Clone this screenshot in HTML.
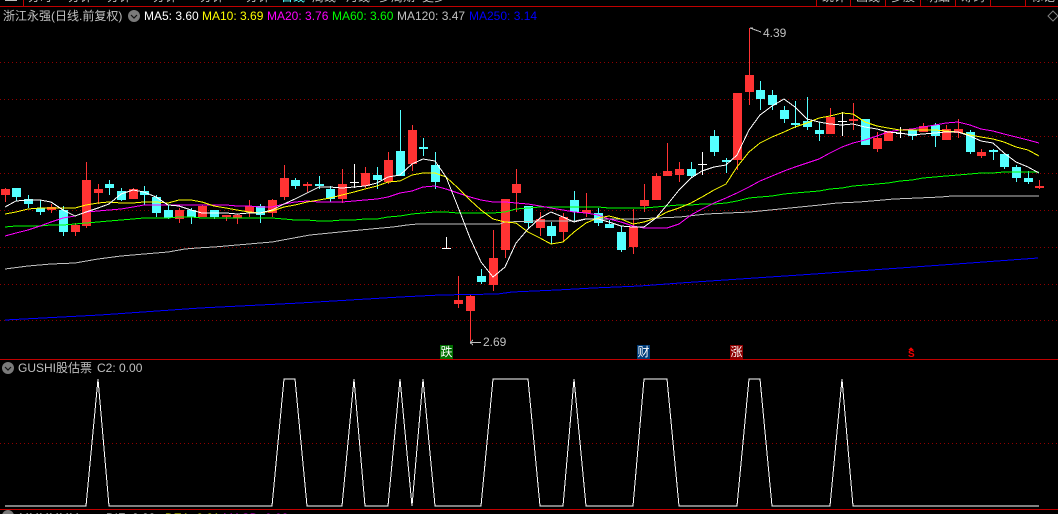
<!DOCTYPE html>
<html><head><meta charset="utf-8"><style>
html,body{margin:0;padding:0;background:#000;}
#w{position:relative;width:1058px;height:514px;overflow:hidden;background:#000;font-family:"Liberation Sans","Noto Sans CJK SC",sans-serif;}
svg{position:absolute;left:0;top:0;}
.t{position:absolute;white-space:nowrap;font-size:12px;line-height:14px;color:#c0c0c0;}
.h{position:absolute;top:-10px;white-space:nowrap;font-size:12px;line-height:14px;color:#c0c0c0;}
.b{position:absolute;width:13px;height:14px;top:345px;color:#fff;font-size:12px;line-height:14px;text-align:center;}
</style></head><body><div id="w">
<svg width="1058" height="514" viewBox="0 0 1058 514">
<g stroke="#900000" stroke-width="1" shape-rendering="crispEdges" fill="none">
<path stroke-dasharray="1 3" d="M0 62.5H1058M0 99.5H1058M0 136.5H1058M0 173.5H1058M0 210.5H1058M0 247.5H1058M0 284.5H1058M0 320.5H1058M0 443.5H1058"/>
<path stroke="#c00000" d="M0 6.5H1058M23.5 0V6M816.5 0V6M850.5 0V6M885.5 0V6M920.5 0V6M955.5 0V6M990.5 0V6M1025.5 0V6M0 359.5H1058M0 509.5H1058"/>
</g>
<rect x="5" y="0" width="12" height="1" fill="#c0c0c0"/>
<path fill="#ff3333" shape-rendering="crispEdges" d="M1 189h9v6h-9zM47 207h9v3h-9zM71 225h9v7h-9zM82 180h9v46h-9zM94 189h9v4h-9zM129 189h9v10h-9zM175 210h9v9h-9zM198 206h9v11h-9zM222 215h9v2h-9zM233 215h9v3h-9zM245 206h9v6h-9zM268 200h9v13h-9zM280 178h9v19h-9zM303 184h9v2h-9zM338 184h9v15h-9zM361 173h9v13h-9zM384 160h9v22h-9zM408 130h9v34h-9zM454 300h9v4h-9zM466 296h9v15h-9zM489 258h9v27h-9zM501 199h9v51h-9zM512 184h9v9h-9zM536 219h9v9h-9zM559 217h9v15h-9zM582 210h9v3h-9zM629 227h9v20h-9zM640 200h9v6h-9zM652 176h9v24h-9zM663 171h9v5h-9zM675 169h9v6h-9zM733 93h9v67h-9zM745 75h9v17h-9zM826 117h9v17h-9zM849 119h9v2h-9zM873 138h9v11h-9zM884 131h9v10h-9zM919 126h9v6h-9zM942 129h9v11h-9zM954 129h9v4h-9zM977 152h9v4h-9zM1035 186h9v2h-9z"/>
<path stroke="#ff3333" fill="none" shape-rendering="crispEdges" d="M5.5 188V202M51.5 204V213M75.5 223V236M86.5 162V228M98.5 184V204M133.5 188V199M179.5 208V223M202.5 205V217M226.5 215V221M237.5 214V224M249.5 200V217M272.5 199V217M284.5 165V200M307.5 182V192M342.5 169V203M365.5 167V188M388.5 152V184M412.5 125V171M458.5 276V308M470.5 294V341M493.5 230V291M505.5 199V258M516.5 169V212M540.5 212V236M563.5 213V242M586.5 193V217M633.5 209V254M644.5 184V212M656.5 173V200M667.5 143V176M679.5 162V182M737.5 93V170M749.5 28V105M830.5 108V134M853.5 103V130M877.5 132V152M888.5 131V141M923.5 123V132M946.5 125V140M958.5 119V138M981.5 149V158M1039.5 180V189"/>
<path fill="#54ffff" shape-rendering="crispEdges" d="M12 188h9v9h-9zM24 199h9v5h-9zM36 208h9v4h-9zM59 210h9v22h-9zM105 184h9v4h-9zM117 191h9v9h-9zM140 191h9v4h-9zM152 197h9v16h-9zM164 210h9v8h-9zM187 210h9v7h-9zM210 210h9v7h-9zM256 206h9v9h-9zM291 180h9v6h-9zM315 184h9v2h-9zM326 189h9v10h-9zM373 175h9v5h-9zM396 151h9v25h-9zM419 147h9v2h-9zM431 165h9v17h-9zM477 276h9v6h-9zM524 206h9v17h-9zM547 226h9v10h-9zM570 200h9v12h-9zM594 213h9v10h-9zM605 224h9v4h-9zM617 232h9v18h-9zM687 169h9v7h-9zM710 136h9v16h-9zM722 160h9v2h-9zM756 90h9v9h-9zM768 95h9v10h-9zM780 110h9v9h-9zM791 123h9v2h-9zM803 121h9v6h-9zM815 130h9v4h-9zM861 119h9v26h-9zM908 130h9v6h-9zM931 125h9v11h-9zM966 132h9v20h-9zM989 150h9v2h-9zM1000 154h9v13h-9zM1012 167h9v11h-9zM1024 178h9v4h-9z"/>
<path stroke="#54ffff" fill="none" shape-rendering="crispEdges" d="M16.5 188V201M28.5 195V208M40.5 200V215M63.5 206V236M109.5 180V195M121.5 188V201M144.5 186V205M156.5 195V217M168.5 205V219M191.5 208V224M214.5 210V219M260.5 204V223M295.5 178V189M319.5 176V189M330.5 186V202M377.5 167V189M400.5 110V176M423.5 138V156M435.5 152V189M481.5 269V284M528.5 206V229M551.5 222V244M574.5 191V221M598.5 208V226M609.5 220V228M621.5 226V252M691.5 162V178M714.5 130V156M726.5 158V173M760.5 81V110M772.5 90V110M784.5 106V123M795.5 101V128M807.5 97V130M819.5 122V141M865.5 119V145M912.5 130V140M935.5 123V147M970.5 130V154M993.5 149V160M1004.5 154V169M1016.5 165V182M1028.5 171V184"/>
<path stroke="#fff" fill="none" shape-rendering="crispEdges" d="M354.5 164V188M350 182.5H359M446.5 237V248M442 248.5H451M702.5 152V175M698 164.5H707M842.5 112V136M838 121.5H847M900.5 127V138M896 133.5H905"/>
<g fill="none" stroke-width="1" shape-rendering="crispEdges">
<polyline stroke="#0000ff" points="5,320 100,315 200,308 300,303 400,297 440,295 498,294 512,292 557,290 593,288 640,286 680,283 740,279 800,275 900,268 970,263 1038,258"/>
<polyline stroke="#c0c0c0" points="5,269 28,266 51,264 75,263 98,259 121,256 144,254 168,252 185,249 197,248 214,247 226,246 237,245 249,244 260,243 272,242 310,235 350,231 371,229 393,227 407,225 418,224 470,224 500,224 505,222 540,221 575,221 585,219 633,219 680,217 706,214 750,212 790,208 820,205 837,203 859,202 883,200 894,199 918,198 941,197 952,196 1039,196"/>
<polyline stroke="#00ff00" points="5,227 16,226 28,226 40,226 51,225 63,225 75,224 86,223 98,222 109,221 121,220 133,219 144,218 156,218 168,218 179,217 191,217 202,218 214,218 226,218 237,218 249,218 260,218 272,218 284,219 295,220 307,220 319,221 330,221 342,220 354,220 365,219 377,219 388,217 400,216 412,214 423,213 435,212 446,212 458,213 470,213 481,213 493,213 505,212 516,209 528,208 540,207 551,207 563,207 574,207 586,207 598,207 609,208 621,208 633,208 644,208 656,207 667,206 679,205 691,205 702,204 714,204 726,203 737,201 749,198 760,197 772,196 784,194 795,193 807,192 819,191 830,189 842,188 853,186 865,185 877,184 888,183 900,181 912,180 923,178 935,177 946,176 958,175 970,174 981,173 993,173 1004,172 1016,172 1028,172 1039,172"/>
<polyline stroke="#ff00ff" points="5,236 16,233 28,230 40,226 51,222 63,218 75,216 86,212 98,211 109,210 121,209 133,207 144,205 156,205 168,205 179,205 191,205 202,205 214,205 226,205 237,206 249,206 260,207 272,207 284,204 295,202 307,201 319,202 330,202 342,202 354,201 365,200 377,199 388,197 400,193 412,191 423,187 435,186 446,189 458,193 470,197 481,200 493,202 505,202 516,203 528,204 540,206 551,208 563,210 574,212 586,213 598,215 609,219 621,222 633,226 644,228 656,228 667,228 679,224 691,215 702,209 714,203 726,198 737,193 749,187 760,181 772,176 784,171 795,167 807,163 819,159 830,153 842,147 853,143 865,140 877,136 888,132 900,130 912,129 923,127 935,125 946,123 958,122 970,125 981,129 993,131 1004,134 1016,137 1028,140 1039,143"/>
<polyline stroke="#ffff00" points="5,214 16,212 28,209 40,208 51,208 63,208 75,208 86,205 98,203 109,202 121,203 133,203 144,202 156,202 168,203 179,200 191,200 202,202 214,206 226,208 237,210 249,212 260,213 272,211 284,207 295,205 307,202 319,200 330,198 342,195 354,192 365,189 377,186 388,182 400,181 412,175 423,173 435,173 446,177 458,188 470,200 481,210 493,219 505,222 516,223 528,232 540,238 551,244 563,242 574,232 586,223 598,218 609,216 621,219 633,224 644,222 656,218 667,212 679,208 691,203 702,197 714,190 726,184 737,167 749,152 760,143 772,137 784,132 795,127 807,123 819,118 830,116 842,113 853,114 865,122 877,126 888,128 900,130 912,130 923,130 935,130 946,131 958,132 970,135 981,137 993,139 1004,142 1016,147 1028,150 1039,156"/>
<polyline stroke="#ffffff" points="5,207 16,201 28,200 40,200 51,202 63,210 75,216 86,212 98,208 109,204 121,194 133,190 144,192 156,197 168,205 179,206 191,210 202,213 214,213 226,213 237,214 249,213 260,213 272,210 284,204 295,199 307,193 319,187 330,187 342,188 354,187 365,186 377,183 388,177 400,175 412,164 423,159 435,161 446,177 458,207 470,238 481,262 493,277 505,267 516,243 528,229 540,218 551,212 563,217 574,222 586,219 598,219 609,222 621,226 633,227 644,227 656,218 667,205 679,190 691,178 702,171 714,167 726,165 737,155 749,130 760,115 772,106 784,99 795,107 807,119 819,122 830,124 842,125 853,124 865,127 877,129 888,132 900,133 912,135 923,134 935,133 946,132 958,132 970,136 981,141 993,143 1004,153 1016,162 1028,167 1039,173"/>
<polyline stroke="#ffffff" points="5,506 86,506 98,379 109,506 272,506 284,379 295,379 307,506 342,506 354,379 365,506 388,506 400,379 412,506 423,379 435,506 481,506 493,379 528,379 540,506 563,506 574,379 586,506 633,506 644,379 667,379 679,506 737,506 749,379 760,379 772,506 830,506 842,379 853,506 1039,506"/>
</g>
<g stroke="#c0c0c0" fill="none" shape-rendering="crispEdges">
<path d="M470 342.5H481M470 342.5L473 340M470 342.5L473 345"/>
<path d="M750 28L761 32M750 28H753"/>
</g>
<g stroke="#808080" fill="none"><path d="M1053 11L1058 16L1053 21L1048 16Z"/></g>
<circle cx="134" cy="16" r="6" fill="#7a7a7a"/><path d="M131 15L134 18L137 15" stroke="#111" stroke-width="1.2" fill="none"/>
<circle cx="8" cy="368" r="6" fill="#7a7a7a"/><path d="M5 367L8 370L11 367" stroke="#111" stroke-width="1.2" fill="none"/>
<circle cx="8" cy="516" r="6" fill="#7a7a7a"/>
<path d="M911 347L908.5 350H913.5Z" fill="#f00000" shape-rendering="crispEdges"/>
</svg>

<div class="h" style="left:28px;">分时</div>
<div class="h" style="left:68px;">分钟</div>
<div class="h" style="left:107px;">分钟</div>
<div class="h" style="left:153px;">分钟</div>
<div class="h" style="left:200px;">分钟</div>
<div class="h" style="left:246px;">分钟</div>
<div class="h" style="left:281px;color:#54ffff;">日线</div>
<div class="h" style="left:312px;">周线</div>
<div class="h" style="left:346px;">月线</div>
<div class="h" style="left:379px;">多周期</div>
<div class="h" style="left:422px;">更多</div>
<div class="h" style="left:822px;">统计</div>
<div class="h" style="left:856px;">画线</div>
<div class="h" style="left:891px;">多股</div>
<div class="h" style="left:926px;">明细</div>
<div class="h" style="left:961px;">筹码</div>
<div class="h" style="left:1031px;">标记</div>

<div class="t" style="left:3px;top:9px;">浙江永强(日线.前复权)</div>
<div class="t" style="left:144px;top:9px;color:#fff;">MA5: 3.60</div>
<div class="t" style="left:202px;top:9px;color:#ff0;">MA10: 3.69</div>
<div class="t" style="left:267px;top:9px;color:#f0f;">MA20: 3.76</div>
<div class="t" style="left:332px;top:9px;color:#0f0;">MA60: 3.60</div>
<div class="t" style="left:397px;top:9px;">MA120: 3.47</div>
<div class="t" style="left:469px;top:9px;color:#00f;">MA250: 3.14</div>
<div class="t" style="left:763px;top:26px;">4.39</div>
<div class="t" style="left:483px;top:335px;">2.69</div>
<div class="b" style="left:440px;background:#006e00;">跌</div>
<div class="b" style="left:637px;background:#003c78;">财</div>
<div class="b" style="left:730px;background:#8b0000;">涨</div>
<div class="t" style="left:908px;top:348px;color:#f00000;font-size:10px;font-weight:bold;">S</div>
<div class="t" style="left:18px;top:361px;">GUSHI股估票</div>
<div class="t" style="left:97px;top:361px;">C2: 0.00</div>
<div class="t" style="left:19px;top:511px;color:#fff;">MMMMMM</div>
<div class="t" style="left:106px;top:511px;color:#fff;">DIF: 0.00</div>
<div class="t" style="left:165px;top:511px;color:#ff0;">DEA: 0.01</div>
<div class="t" style="left:223px;top:511px;color:#f0f;">MACD: 0.02</div>
</div></body></html>
